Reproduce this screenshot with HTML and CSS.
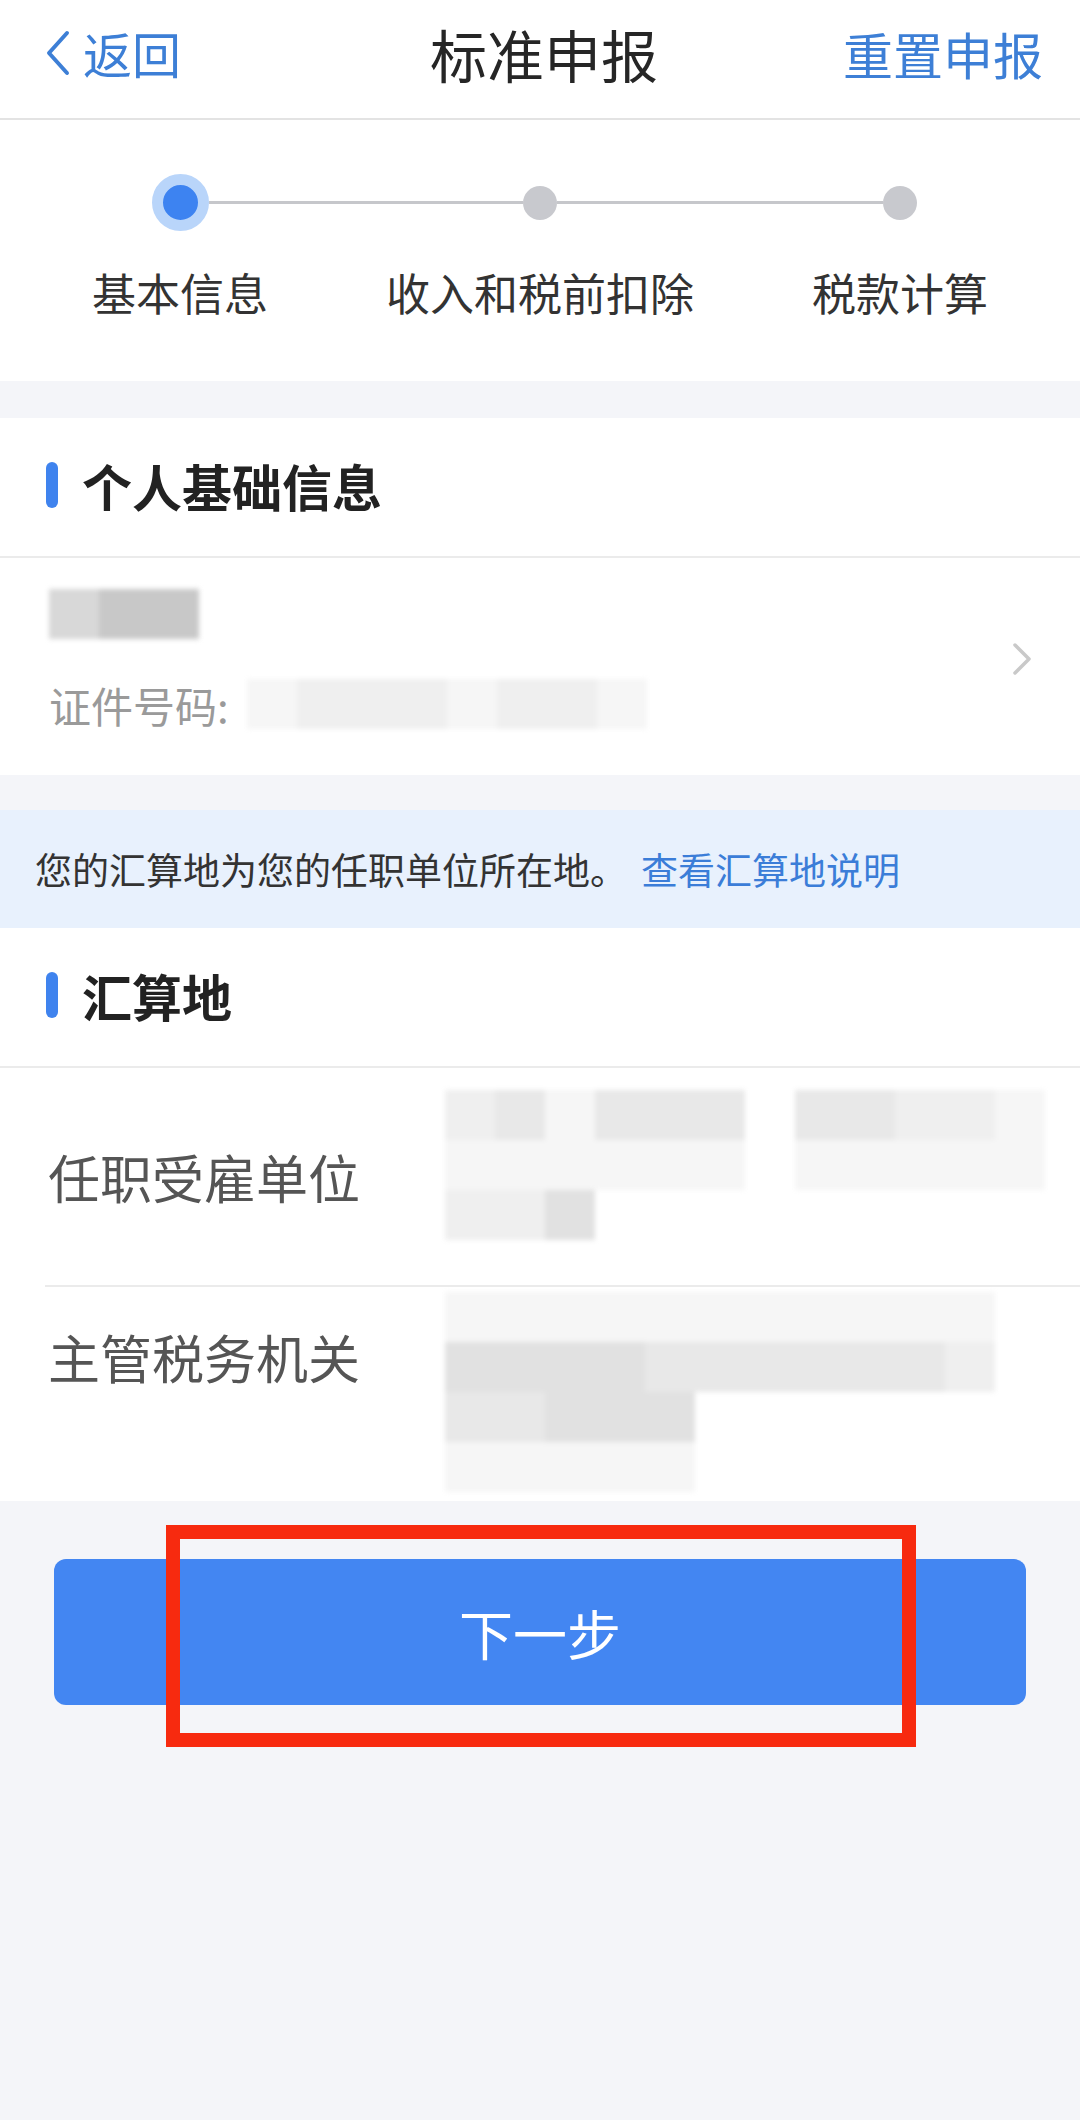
FILE: index.html
```html
<!DOCTYPE html>
<html lang="zh-CN">
<head>
    <meta charset="UTF-8">
    <meta name="viewport" content="width=device-width, initial-scale=1.0">
    <title>标准申报</title>
    <link rel="stylesheet" href="styles.css">
</head>
<body>
    <header class="topbar">
        <a class="back">
            <svg width="26" height="46" viewBox="0 0 26 46"><polyline points="22,3 4,23 22,43" fill="none" stroke="#3d7fd6" stroke-width="4" stroke-linecap="round" stroke-linejoin="round"/></svg>
            <span>返回</span>
        </a>
        <h1 class="title">标准申报</h1>
        <a class="reset">重置申报</a>
    </header>

    <section class="steps">
        <div class="step">
            <div class="step-track"><span class="step-line none"></span><span class="dot active"></span><span class="step-line"></span></div>
            <div class="step-label">基本信息</div>
        </div>
        <div class="step">
            <div class="step-track"><span class="step-line"></span><span class="dot"></span><span class="step-line"></span></div>
            <div class="step-label">收入和税前扣除</div>
        </div>
        <div class="step">
            <div class="step-track"><span class="step-line"></span><span class="dot"></span><span class="step-line none"></span></div>
            <div class="step-label">税款计算</div>
        </div>
    </section>

    <section class="card">
        <div class="section-head">
            <span class="bar"></span>
            <h2 class="section-title">个人基础信息</h2>
        </div>
        <div class="person">
            <div class="person-info">
                <div class="mosaic name-blur">
                    <span class="n1"></span><span class="n2"></span><span class="n2"></span>
                </div>
                <div class="id-line">
                    <span class="id-label">证件号码:</span>
                    <div class="mosaic id-blur">
                        <span class="c1"></span><span class="c2"></span><span class="c2"></span><span class="c2"></span>
                        <span class="c1"></span><span class="c2"></span><span class="c2"></span><span class="c1"></span>
                    </div>
                </div>
            </div>
            <svg class="arrow" width="22" height="34" viewBox="0 0 22 34"><polyline points="4,3 18,17 4,31" fill="none" stroke="#c9c9c9" stroke-width="3.5" stroke-linecap="round" stroke-linejoin="round"/></svg>
        </div>
    </section>

    <div class="notice">
        您的汇算地为您的任职单位所在地。<a class="notice-link">查看汇算地说明</a>
    </div>

    <section class="card">
        <div class="section-head">
            <span class="bar"></span>
            <h2 class="section-title">汇算地</h2>
        </div>
        <div class="field-list">
            <div class="field field-a">
                <div class="field-label">任职受雇单位</div>
                <div class="mosaic value-a">
                    <span class="c2"></span><span class="c3"></span><span class="c1"></span><span class="c3"></span><span class="c3"></span><span class="c3"></span><span class="c0"></span><span class="c3"></span><span class="c3"></span><span class="c2"></span><span class="c2"></span><span class="c1"></span>
                    <span class="c1"></span><span class="c1"></span><span class="c1"></span><span class="c1"></span><span class="c1"></span><span class="c1"></span><span class="c0"></span><span class="c1"></span><span class="c1"></span><span class="c1"></span><span class="c1"></span><span class="c1"></span>
                    <span class="c2"></span><span class="c2"></span><span class="c4"></span>
                </div>
            </div>
            <div class="field field-b">
                <div class="field-label">主管税务机关</div>
                <div class="mosaic value-b">
                    <span class="c1"></span><span class="c1"></span><span class="c1"></span><span class="c1"></span><span class="c1"></span><span class="c1"></span><span class="c1"></span><span class="c1"></span><span class="c1"></span><span class="c1"></span><span class="c1"></span>
                    <span class="c4"></span><span class="c4"></span><span class="c4"></span><span class="c4"></span><span class="c3"></span><span class="c3"></span><span class="c3"></span><span class="c3"></span><span class="c3"></span><span class="c3"></span><span class="c2"></span>
                    <span class="c3"></span><span class="c3"></span><span class="c4"></span><span class="c4"></span><span class="c4"></span><span class="c0"></span><span class="c0"></span><span class="c0"></span><span class="c0"></span><span class="c0"></span><span class="c0"></span>
                    <span class="c1"></span><span class="c1"></span><span class="c1"></span><span class="c1"></span><span class="c1"></span>
                </div>
            </div>
        </div>
    </section>

    <div class="actions">
        <div class="next-wrap">
            <button class="next-btn">下一步</button>
            <span class="highlight"></span>
        </div>
    </div>
</body>
</html>
```

FILE: styles.css
```css
* {
    box-sizing: border-box;
}
body {
    margin: 0;
    min-height: 2120px;
    background: #f4f5f9;
    font-family: "Noto Sans CJK SC", "Noto Sans", sans-serif;
    color: #333;
}
h1, h2 {
    margin: 0;
    font-weight: normal;
}
.topbar {
    display: grid;
    grid-template-columns: 1fr auto 1fr;
    align-items: center;
    height: 120px;
    padding: 0 37px 12px 45px;
    background: #fff;
    border-bottom: 2px solid #e3e3e3;
}
.back {
    display: flex;
    align-items: center;
    gap: 12px;
    color: #3d7fd6;
    font-size: 49px;
    line-height: 1.2;
}
.title {
    font-size: 57px;
    line-height: 1.2;
    color: #262626;
}
.reset {
    justify-self: end;
    color: #3d7fd6;
    font-size: 50px;
    line-height: 1.2;
}
.steps {
    display: grid;
    grid-template-columns: repeat(3, 1fr);
    padding: 54px 0 60px;
    background: #fff;
}
.step {
    display: flex;
    flex-direction: column;
    align-items: center;
}
.step-track {
    display: flex;
    align-items: center;
    width: 100%;
    height: 57px;
}
.step-line {
    flex: 1;
    height: 3px;
    background: #c6c7cb;
}
.step-line.none {
    background: transparent;
}
.dot {
    width: 34px;
    height: 34px;
    border-radius: 50%;
    background: #c8c9ce;
}
.dot.active {
    width: 57px;
    height: 57px;
    background: #3d83f1;
    border: 11px solid #b9d5fa;
}
.step-label {
    margin-top: 33px;
    font-size: 44px;
    line-height: 57px;
    color: #333;
}
.card {
    margin-top: 37px;
    background: #fff;
}
.notice + .card {
    margin-top: 0;
}
.section-head {
    display: flex;
    align-items: center;
    gap: 24px;
    height: 140px;
    padding: 0 0 4px 46px;
    border-bottom: 2px solid #ebebeb;
}
.bar {
    width: 12px;
    height: 46px;
    border-radius: 6px;
    background: #3f83ee;
}
.section-title {
    font-size: 50px;
    font-weight: 700;
    color: #222;
}
.person {
    display: flex;
    align-items: center;
    justify-content: space-between;
    padding: 31px 47px 46px 49px;
}
.mosaic {
    display: grid;
    grid-auto-rows: 50px;
    filter: blur(2.5px);
}
.mosaic span {
    display: block;
}
.name-blur {
    grid-template-columns: repeat(3, 50px);
}
.id-line {
    display: flex;
    align-items: center;
    margin-top: 40px;
    height: 50px;
}
.id-label {
    font-size: 42px;
    color: #9a9a9a;
}
.id-blur {
    grid-template-columns: repeat(8, 50px);
    margin-left: 18px;
}
.notice {
    display: flex;
    align-items: center;
    height: 118px;
    margin-top: 35px;
    padding-left: 35px;
    background: #e8f1fd;
    font-size: 37px;
    color: #333;
}
.notice-link {
    margin-left: 14px;
    color: #3b7dd8;
}
.field-list {
    padding-left: 45px;
}
.field {
    display: flex;
    padding-left: 3px;
}
.field + .field {
    border-top: 2px solid #ebebeb;
}
.field-a {
    align-items: center;
    height: 217px;
}
.field-b {
    align-items: flex-start;
    height: 216px;
}
.field-label {
    flex-shrink: 0;
    width: 397px;
    font-size: 52px;
    line-height: 60px;
    color: #555;
}
.field-b .field-label {
    margin-top: 40px;
}
.value-a {
    align-self: flex-start;
    margin-top: 22px;
    grid-template-columns: repeat(12, 50px);
}
.value-b {
    margin-top: 5px;
    grid-template-columns: repeat(11, 50px);
}
.c0 { background: transparent; }
.c1 { background: #f6f6f6; }
.c2 { background: #efefef; }
.c3 { background: #e8e8e8; }
.c4 { background: #e1e1e1; }
.n1 { background: #d8d8d8; }
.n2 { background: #c8c8c8; }
.actions {
    padding: 58px 54px 0;
}
.next-wrap {
    position: relative;
}
.next-btn {
    display: block;
    width: 100%;
    height: 146px;
    border: none;
    border-radius: 12px;
    background: #4386f2;
    color: #fff;
    font-family: inherit;
    font-size: 54px;
}
.highlight {
    position: absolute;
    left: 112px;
    top: -34px;
    width: 750px;
    height: 222px;
    border: 14px solid #f72a0f;
}
```
